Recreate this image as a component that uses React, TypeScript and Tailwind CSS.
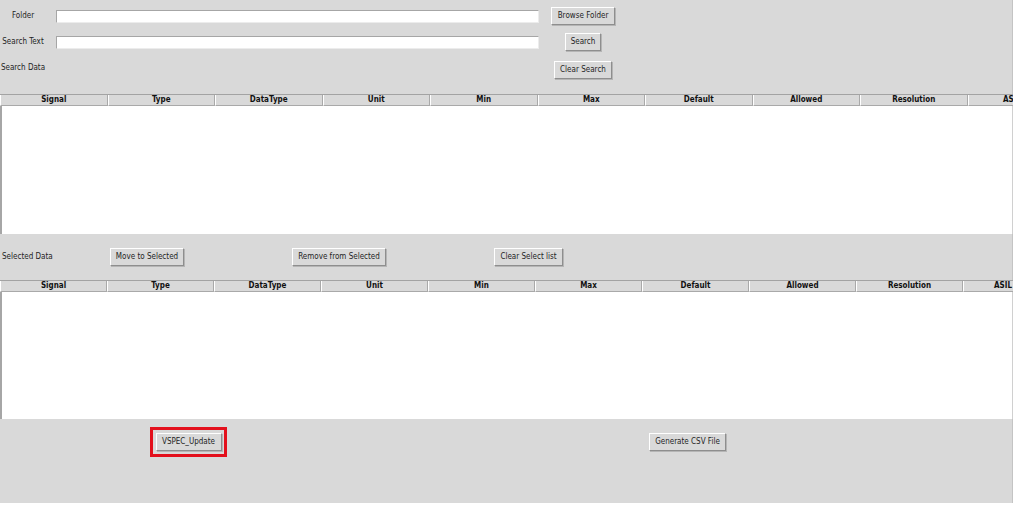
import React from 'react';

const columns = ['Signal', 'Type', 'DataType', 'Unit', 'Min', 'Max', 'Default', 'Allowed', 'Resolution'];

const TkButton = ({ label, width }: { label: string; width: string }) => (
  <button
    type="button"
    className={`${width} h-[18px] shrink-0 bg-[#d9d9d9] border border-t-white border-l-white border-r-[#8e8e8e] border-b-[#8e8e8e] shadow-[1px_1px_0_#b5b5b5] text-[8px] leading-none text-[#1e1e1e] flex items-center justify-center`}
  >
    {label}
  </button>
);

const TkEntry = () => (
  <div className="w-[483px] h-[13px] bg-white border border-t-[#a6a6a6] border-l-[#a6a6a6] border-r-[#ececec] border-b-[#ececec]" />
);

const DataTable = ({
  colWidth,
  bodyHeight,
  lastPad,
}: {
  colWidth: string;
  bodyHeight: string;
  lastPad: string;
}) => (
  <div className="w-[1013px] overflow-hidden">
    <div className="flex h-[12px] border-t border-[#a3a3a3] bg-[#d9d9d9]">
      {columns.map((col) => (
        <div
          key={col}
          className={`${colWidth} shrink-0 h-full border-l border-l-white border-r border-r-[#a9a9a9] border-b border-b-[#a9a9a9] flex items-center justify-center text-[8px] font-bold leading-none text-[#111]`}
        >
          {col}
        </div>
      ))}
      <div
        className={`flex-1 min-w-0 h-full border-l border-l-white border-b border-b-[#a9a9a9] flex items-center justify-end ${lastPad} text-[8px] font-bold leading-none text-[#111] whitespace-nowrap`}
      >
        ASIL
      </div>
    </div>
    <div className={`${bodyHeight} bg-white border-l-2 border-[#a6a6a6] border-r border-r-[#d0d0d0]`} />
  </div>
);

export default function App() {
  return (
    <div className="w-[1015px] h-[509px] bg-white font-['DejaVu_Sans_Condensed','DejaVu_Sans',sans-serif]">
      <div className="w-[1013px] h-[503px] bg-[#d9d9d9] border-r border-[#c4c4c4] flex flex-col">
        {/* search controls */}
        <div className="mt-[7px] h-[18px] flex items-center">
          <span className="w-[46px] text-center text-[8px] text-[#1e1e1e]">Folder</span>
          <div className="ml-[10px]">
            <TkEntry />
          </div>
          <div className="w-[88px] flex justify-center">
            <TkButton label="Browse Folder" width="w-[64px]" />
          </div>
        </div>
        <div className="mt-[8px] h-[18px] flex items-center">
          <span className="w-[46px] text-center text-[8px] text-[#1e1e1e]">Search Text</span>
          <div className="ml-[10px]">
            <TkEntry />
          </div>
          <div className="w-[88px] flex justify-center">
            <TkButton label="Search" width="w-[36px]" />
          </div>
        </div>
        <div className="mt-[10px] h-[18px] flex items-center">
          <span className="w-[46px] -mt-[4px] text-center text-[8px] text-[#1e1e1e]">Search Data</span>
          <div className="w-[493px]" />
          <div className="w-[88px] flex justify-center">
            <TkButton label="Clear Search" width="w-[58px]" />
          </div>
        </div>

        <div className="mt-[15px]">
          <DataTable colWidth="w-[107.5px]" bodyHeight="h-[128px]" lastPad="-mr-[8px]" />
        </div>

        {/* selection controls */}
        <div className="mt-[14px] h-[18px] flex items-center">
          <span className="w-[110px] pl-[2px] text-[8px] text-[#1e1e1e]">Selected Data</span>
          <TkButton label="Move to Selected" width="w-[74px]" />
          <div className="w-[108px]" />
          <TkButton label="Remove from Selected" width="w-[94px]" />
          <div className="w-[108px]" />
          <TkButton label="Clear Select list" width="w-[69px]" />
        </div>

        <div className="mt-[14px]">
          <DataTable colWidth="w-[107px]" bodyHeight="h-[127px]" lastPad="pr-[1px]" />
        </div>

        {/* actions */}
        <div className="mt-[8px] flex items-start">
          <div className="ml-[150px] w-[77px] h-[30px] border-[3px] border-[#e3101c] flex items-center justify-center">
            <TkButton label="VSPEC_Update" width="w-[66px]" />
          </div>
          <div className="ml-[422px] mt-[6px]">
            <TkButton label="Generate CSV File" width="w-[77px]" />
          </div>
        </div>
      </div>
    </div>
  );
}
